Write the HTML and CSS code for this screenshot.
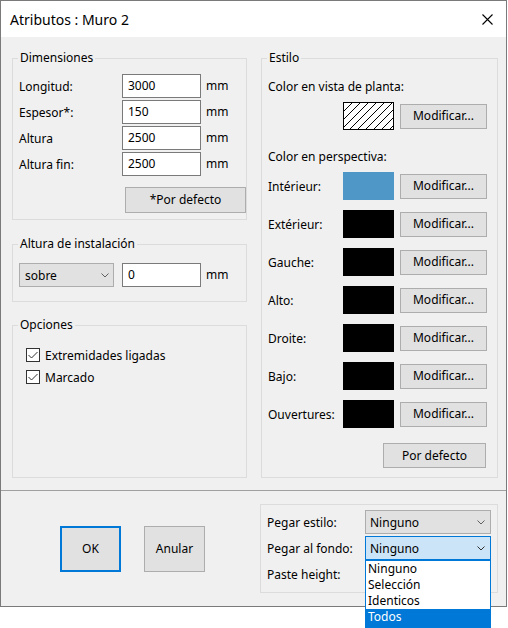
FILE: index.html
```html
<!DOCTYPE html>
<html lang="es">
<head>
<meta charset="utf-8">
<title>Atributos : Muro 2</title>
<link rel="stylesheet" href="styles.css">
</head>
<body>
<div class="window">
  <div class="titlebar">
    <span class="title">Atributos : Muro 2</span>
    <svg class="close" width="11" height="11" viewBox="0 0 11 11"><path d="M0.5 0.5 L10.5 10.5 M10.5 0.5 L0.5 10.5" stroke="#000" stroke-width="1.1" fill="none"/></svg>
  </div>

  <div class="content">
    <div class="col-left">
      <div class="group dims">
        <div class="group-title">Dimensiones</div>
        <div class="field-rows">
          <div class="field-row"><span class="flabel">Longitud:</span><span class="input">3000</span><span class="unit">mm</span></div>
          <div class="field-row"><span class="flabel">Espesor*:</span><span class="input">150</span><span class="unit">mm</span></div>
          <div class="field-row"><span class="flabel">Altura</span><span class="input">2500</span><span class="unit">mm</span></div>
          <div class="field-row"><span class="flabel">Altura fin:</span><span class="input">2500</span><span class="unit">mm</span></div>
        </div>
        <div class="dims-btn-row"><button class="btn btn-def">*Por defecto</button></div>
      </div>

      <div class="group install">
        <div class="group-title">Altura de instalación</div>
        <div class="install-row">
          <span class="select select-grey sel-sobre">sobre<svg class="chev" width="8" height="5" viewBox="0 0 8 5"><path d="M0.5 0.5 L4 4 L7.5 0.5" stroke="#606060" fill="none"/></svg></span>
          <span class="input">0</span><span class="unit">mm</span>
        </div>
      </div>

      <div class="group options">
        <div class="group-title">Opciones</div>
        <div class="checks">
          <label class="check"><svg class="cbox" width="14" height="14" viewBox="0 0 14 14"><rect x="0.5" y="0.5" width="13" height="13" fill="#fff" stroke="#333"/><path d="M2.5 7 L5.5 10 L11.5 4" stroke="#333" fill="none"/></svg>Extremidades ligadas</label>
          <label class="check"><svg class="cbox" width="14" height="14" viewBox="0 0 14 14"><rect x="0.5" y="0.5" width="13" height="13" fill="#fff" stroke="#333"/><path d="M2.5 7 L5.5 10 L11.5 4" stroke="#333" fill="none"/></svg>Marcado</label>
        </div>
      </div>
    </div>

    <div class="group style">
      <div class="group-title">Estilo</div>
      <div class="stext t-plan">Color en vista de planta:</div>
      <div class="plan-row">
        <svg class="swatch hatch" width="51" height="28" viewBox="0 0 51 28" shape-rendering="crispEdges">
          <rect x="0" y="0" width="51" height="28" fill="#fff"/>
          <g stroke="#000" stroke-width="1">
            <line x1="-26" y1="28" x2="2" y2="0"/>
            <line x1="-18" y1="28" x2="10" y2="0"/>
            <line x1="-10" y1="28" x2="18" y2="0"/>
            <line x1="-2" y1="28" x2="26" y2="0"/>
            <line x1="6" y1="28" x2="34" y2="0"/>
            <line x1="14" y1="28" x2="42" y2="0"/>
            <line x1="22" y1="28" x2="50" y2="0"/>
            <line x1="30" y1="28" x2="58" y2="0"/>
            <line x1="38" y1="28" x2="66" y2="0"/>
            <line x1="46" y1="28" x2="74" y2="0"/>
          </g>
          <rect x="0.5" y="0.5" width="50" height="27" fill="none" stroke="#000"/>
        </svg>
        <button class="btn btn-mod">Modificar...</button>
      </div>
      <div class="stext t-persp">Color en perspectiva:</div>
      <div class="color-rows">
        <div class="color-row"><span class="clabel">Intérieur:</span><span class="swatch sw-blue"></span><button class="btn btn-mod">Modificar...</button></div>
        <div class="color-row"><span class="clabel">Extérieur:</span><span class="swatch sw-black"></span><button class="btn btn-mod">Modificar...</button></div>
        <div class="color-row"><span class="clabel">Gauche:</span><span class="swatch sw-black"></span><button class="btn btn-mod">Modificar...</button></div>
        <div class="color-row"><span class="clabel">Alto:</span><span class="swatch sw-black"></span><button class="btn btn-mod">Modificar...</button></div>
        <div class="color-row"><span class="clabel">Droite:</span><span class="swatch sw-black"></span><button class="btn btn-mod">Modificar...</button></div>
        <div class="color-row"><span class="clabel">Bajo:</span><span class="swatch sw-black"></span><button class="btn btn-mod">Modificar...</button></div>
        <div class="color-row"><span class="clabel">Ouvertures:</span><span class="swatch sw-black"></span><button class="btn btn-mod">Modificar...</button></div>
      </div>
      <div class="style-def-row"><button class="btn btn-def2">Por defecto</button></div>
    </div>
  </div>

  <div class="footer">
    <div class="actions">
      <button class="btn btn-big btn-ok">OK</button>
      <button class="btn btn-big">Anular</button>
    </div>
    <div class="group paste">
      <div class="paste-row"><span class="plabel">Pegar estilo:</span><span class="select select-grey sel-paste">Ninguno<svg class="chev" width="8" height="5" viewBox="0 0 8 5"><path d="M0.5 0.5 L4 4 L7.5 0.5" stroke="#606060" fill="none"/></svg></span></div>
      <div class="paste-row"><span class="plabel">Pegar al fondo:</span><span class="select select-active sel-paste">Ninguno<svg class="chev" width="8" height="5" viewBox="0 0 8 5"><path d="M0.5 0.5 L4 4 L7.5 0.5" stroke="#303030" fill="none"/></svg>
        <span class="droplist">
          <span class="ditem">Ninguno</span>
          <span class="ditem">Selección</span>
          <span class="ditem">Identicos</span>
          <span class="ditem ditem-sel">Todos</span>
        </span></span></div>
      <div class="paste-row"><span class="plabel">Paste height:</span></div>
    </div>
  </div>
</div>
</body>
</html>
```

FILE: styles.css
```css
html, body {
  margin: 0;
  padding: 0;
  background: #fff;
  overflow: hidden;
}
body {
  width: 508px;
  height: 628px;
  font-family: "Noto Sans", "Liberation Sans", sans-serif;
  font-size: 12px;
  color: #000;
}
.window {
  width: 507px;
  height: 607px;
  box-sizing: border-box;
  border: 1px solid #7a7a7a;
  background: #f0f0f0;
  display: flex;
  flex-direction: column;
}
.titlebar {
  height: 36px;
  flex: 0 0 36px;
  background: #fff;
  display: flex;
  align-items: center;
  justify-content: space-between;
  padding: 0 13px 0 9px;
}
.title {
  font-size: 14px;
  line-height: 20px;
  margin-top: 1px;
}
.close { display: block; margin-top: 0; }

.content {
  display: grid;
  grid-template-columns: 235px 237px;
  column-gap: 14px;
  padding: 21px 8px 12px 11px;
}
.col-left {
  display: flex;
  flex-direction: column;
}
.group {
  border: 1px solid #dcdcdc;
}
.group-title {
  margin: -9px 0 0 5px;
  padding: 0 2px;
  line-height: 16px;
  height: 16px;
  width: fit-content;
  background: #f0f0f0;
}

/* Dimensiones */
.field-rows {
  margin-top: 8px;
  display: flex;
  flex-direction: column;
  gap: 2px;
  padding-left: 6px;
}
.field-row, .install-row {
  display: flex;
  align-items: center;
  height: 24px;
}
.flabel { width: 103px; }
.input {
  box-sizing: border-box;
  width: 79px;
  height: 24px;
  border: 1px solid #7a7a7a;
  background: #fff;
  padding-left: 5px;
  line-height: 21px;
}
.unit { margin-left: 5px; margin-top: -1px; }
.dims-btn-row {
  display: flex;
  justify-content: flex-end;
  margin-top: 11px;
  padding-bottom: 6px;
}
.btn {
  font-family: inherit;
  font-size: 12px;
  color: #000;
  background: #e1e1e1;
  border: 1px solid #adadad;
  box-sizing: border-box;
  padding: 0;
  margin: 0;
  height: 25px;
  line-height: 20px;
}
.btn-def { width: 121px; height: 26px; }

/* Altura de instalación */
.install { margin-top: 24px; }
.install-row {
  margin-top: 11px;
  padding: 0 0 14px 6px;
}
.select {
  box-sizing: border-box;
  height: 24px;
  display: flex;
  align-items: center;
  justify-content: space-between;
  position: relative;
}
.select-grey {
  background: #e1e1e1;
  border: 1px solid #adadad;
}
.sel-sobre {
  width: 95px;
  margin-right: 8px;
  padding: 1px 4px 0 5px;
}
.chev { display: block; }

/* Opciones */
.options {
  margin-top: 23px;
  flex: 1;
}
.checks {
  margin-top: 11px;
  padding-left: 13px;
  display: flex;
  flex-direction: column;
}
.check {
  display: flex;
  align-items: center;
  height: 22px;
}
.cbox { display: block; margin-right: 5px; }

/* Estilo */
.style {
  padding: 0 10px 9px 6px;
}
.style .group-title { margin-left: -1px; }
.stext { line-height: 16px; }
.t-plan { margin-top: 13px; }
.plan-row {
  margin-top: 7px;
  display: flex;
  justify-content: flex-end;
  align-items: center;
  gap: 6px;
}
.swatch {
  display: block;
  width: 51px;
  height: 28px;
  flex: 0 0 51px;
}
.sw-blue { background: #4f97c6; }
.sw-black { background: #000; }
.btn-mod { width: 87px; }
.t-persp { margin-top: 19px; }
.color-rows {
  margin-top: 7px;
  display: flex;
  flex-direction: column;
  gap: 10px;
}
.color-row {
  display: flex;
  align-items: center;
  gap: 6px;
  height: 28px;
}
.clabel { flex: 1; }
.style-def-row {
  display: flex;
  justify-content: flex-end;
  margin-top: 15px;
  padding-right: 1px;
}
.btn-def2 { width: 103px; }

/* Footer */
.footer {
  flex: 1;
  border-top: 1px solid #a0a0a0;
  display: flex;
  padding: 0 8px 0 59px;
}
.actions {
  display: flex;
  align-items: center;
  gap: 23px;
}
.btn-big {
  width: 61px;
  height: 46px;
}
.btn-ok {
  border: 2px solid #0078d7;
}
.paste {
  margin-left: auto;
  margin-top: 13px;
  align-self: flex-start;
  width: 238px;
  box-sizing: border-box;
  padding: 5px 6px 6px 6px;
  display: flex;
  flex-direction: column;
  gap: 2px;
}
.paste-row {
  display: flex;
  align-items: center;
  height: 24px;
}
.plabel { width: 98px; }
.sel-paste {
  width: 126px;
  padding: 0 5px 0 4px;
}
.select-active {
  background: #cce4f7;
  border: 1px solid #0078d7;
}
.droplist {
  position: absolute;
  top: 23px;
  left: -1px;
  width: 126px;
  box-sizing: border-box;
  border: 1px solid #0078d7;
  border-bottom: none;
  background: #fff;
  display: flex;
  flex-direction: column;
  z-index: 5;
}
.ditem {
  height: 16px;
  line-height: 16px;
  padding-left: 2px;
}
.ditem-sel {
  background: #0078d7;
  color: #fff;
  height: 20px;
  line-height: 16px;
}
```
